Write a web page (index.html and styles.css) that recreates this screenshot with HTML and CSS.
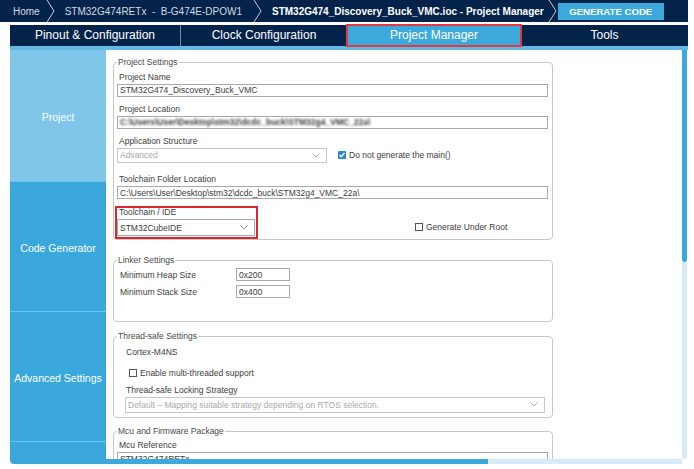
FILE: index.html
```html
<!DOCTYPE html>
<html>
<head>
  <meta charset="UTF-8" />
  <title>Project Manager</title>
  <link rel="stylesheet" href="styles.css">
</head>
<body>
  <div class="topbar">
    <span class="crumb home">Home</span>
    <svg class="chev chev-1" width="9" height="22" viewBox="0 0 9 22"><polyline points="1,0 8,11 1,22" fill="none" stroke="#c3cdd9" stroke-width="1"/></svg>
    <span class="crumb">STM32G474RETx&nbsp; - &nbsp;B-G474E-DPOW1</span>
    <svg class="chev chev-2" width="9" height="22" viewBox="0 0 9 22"><polyline points="1,0 8,11 1,22" fill="none" stroke="#c3cdd9" stroke-width="1"/></svg>
    <span class="crumb current">STM32G474_Discovery_Buck_VMC.ioc - Project Manager</span>
    <svg class="chev chev-3" width="9" height="22" viewBox="0 0 9 22"><polyline points="1,0 8,11 1,22" fill="none" stroke="#c3cdd9" stroke-width="1"/></svg>
    <div class="generate">GENERATE CODE</div>
  </div>

  <div class="tabs">
    <div class="tab tab-pinout">Pinout &amp; Configuration</div>
    <div class="tab tab-clock">Clock Configuration</div>
    <div class="tab tab-pm active">Project Manager</div>
    <div class="tab tab-tools">Tools</div>
  </div>

  <div class="frame">
    <div class="sidebar">
      <div class="side-item side-project">Project</div>
      <div class="side-item">Code Generator</div>
      <div class="side-item">Advanced Settings</div>
      <div class="side-item side-last"></div>
    </div>

    <div class="main">
      <div class="viewport">
        <fieldset class="group group-project">
          <legend>Project Settings</legend>
          <div class="label first">Project Name</div>
          <input class="text" type="text" value="STM32G474_Discovery_Buck_VMC">

          <div class="label">Project Location</div>
          <div class="text blurred"><span>C:\Users\User\Desktop\stm32\dcdc_buck\STM32g4_VMC_22a\</span></div>

          <div class="label">Application Structure</div>
          <div class="row row-structure">
            <div class="select disabled select-structure">
              <span>Advanced</span>
              <svg width="8" height="5" viewBox="0 0 8 5"><polyline points="0.5,0.5 4,4 7.5,0.5" fill="none" stroke="#b0b0b0" stroke-width="1"/></svg>
            </div>
            <div class="check">
              <span class="box checked"><svg width="8" height="8" viewBox="0 0 8 8"><polyline points="1.5,4 3.2,5.8 6.5,2" fill="none" stroke="#fff" stroke-width="1.3"/></svg></span>
              Do not generate the main()
            </div>
          </div>

          <div class="label label-folder">Toolchain Folder Location</div>
          <input class="text" type="text" value="C:\Users\User\Desktop\stm32\dcdc_buck\STM32g4_VMC_22a\">

          <div class="row row-ide">
            <div class="ide">
              <div class="label ide-label">Toolchain / IDE</div>
              <div class="select select-ide">
                <span>STM32CubeIDE</span>
                <svg width="8" height="5" viewBox="0 0 8 5"><polyline points="0.5,0.5 4,4 7.5,0.5" fill="none" stroke="#8a8a8a" stroke-width="1"/></svg>
              </div>
            </div>
            <div class="check check-root">
              <span class="box"></span>
              Generate Under Root
            </div>
          </div>
        </fieldset>

        <fieldset class="group group-linker">
          <legend>Linker Settings</legend>
          <div class="pair first">
            <span class="pair-label">Minimum Heap Size</span>
            <input class="text small" type="text" value="0x200">
          </div>
          <div class="pair">
            <span class="pair-label">Minimum Stack Size</span>
            <input class="text small" type="text" value="0x400">
          </div>
        </fieldset>

        <fieldset class="group group-thread">
          <legend>Thread-safe Settings</legend>
          <div class="label core">Cortex-M4NS</div>
          <div class="check check-thread">
            <span class="box"></span>
            Enable multi-threaded support
          </div>
          <div class="label core">Thread-safe Locking Strategy</div>
          <div class="select disabled select-lock">
            <span>Default &ndash; Mapping suitable strategy depending on RTOS selection.</span>
            <svg width="8" height="5" viewBox="0 0 8 5"><polyline points="0.5,0.5 4,4 7.5,0.5" fill="none" stroke="#b0b0b0" stroke-width="1"/></svg>
          </div>
        </fieldset>

        <fieldset class="group group-mcu">
          <legend>Mcu and Firmware Package</legend>
          <div class="label mcu-label">Mcu Reference</div>
          <input class="text" type="text" value="STM32G474RETx">
        </fieldset>
      </div>
      <div class="hscroll">
        <div class="hthumb"></div>
        <div class="htrack"></div>
      </div>
    </div>

    <div class="vscroll">
      <div class="vthumb"></div>
      <div class="vtrack"></div>
    </div>
  </div>
</body>
</html>
```

FILE: styles.css
```css
body {
  margin: 0;
  background: #ffffff;
  font-family: "Liberation Sans", Arial, sans-serif;
}
.topbar {
  display: flex;
  align-items: center;
  width: 688px;
  height: 22px;
  background: #03234b;
  font-size: 10px;
  color: #d3dae3;
  white-space: nowrap;
}
.crumb.home {
  margin-left: 13px;
}
.crumb.current {
  font-weight: bold;
  color: #ffffff;
}
.chev {
  flex: none;
  display: block;
}
.chev-1 {
  margin: 0 10px 0 6px;
}
.chev-2 {
  margin: 0 10px 0 11px;
}
.chev-3 {
  margin: 0 1px 0 4px;
}
.generate {
  width: 106px;
  height: 17px;
  line-height: 17px;
  background: #3ca9dd;
  color: #ffffff;
  font-size: 9.6px;
  font-weight: bold;
  text-align: center;
}
.tabs {
  display: flex;
  width: 678px;
  height: 21px;
  margin: 3px 0 0 10px;
  background: #03234b;
}
.tab {
  flex: none;
  box-sizing: border-box;
  height: 21px;
  line-height: 21px;
  text-align: center;
  color: #ffffff;
  font-size: 12px;
}
.tab-pinout {
  width: 171px;
  border-right: 1px solid #7d8ba0;
}
.tab-clock {
  width: 166px;
}
.tab-pm {
  width: 174px;
}
.tab-tools {
  width: 167px;
}
.tab.active {
  background: #3ca9dd;
  outline: 2px solid #e5383d;
  outline-offset: -1px;
}
.frame {
  display: flex;
  width: 678px;
  margin-left: 10px;
  border-top: 4px solid #62b9e4;
}
.sidebar {
  width: 96px;
  flex: none;
  display: flex;
  flex-direction: column;
}
.side-item {
  box-sizing: border-box;
  height: 130px;
  padding-top: 3px;
  display: flex;
  align-items: center;
  justify-content: center;
  background: #3aa8dc;
  border-top: 1px solid #72c1e8;
  color: #ffffff;
  font-size: 10.5px;
}
.side-project {
  height: 131px;
  background: #80c6ea;
  border-top: none;
}
.side-last {
  height: 23px;
  border-bottom-left-radius: 4px;
}
.main {
  width: 576px;
  flex: none;
  display: flex;
  flex-direction: column;
}
.viewport {
  height: 409px;
  overflow: hidden;
  padding: 7.5px 0 0 7px;
  box-sizing: border-box;
  font-size: 8.5px;
  color: #3c3c3c;
}
.hscroll {
  display: flex;
  height: 5px;
}
.hthumb {
  width: 382px;
  background: #3ca9dd;
}
.htrack {
  flex: 1;
  background: #d6eaf7;
}
.vscroll {
  width: 5px;
  flex: none;
  display: flex;
  flex-direction: column;
}
.vthumb {
  height: 212px;
  background: #3ca9dd;
  border-radius: 0 0 3px 3px;
}
.vtrack {
  height: 197px;
  background: #d6eaf7;
}

/* form groups */
.group {
  box-sizing: border-box;
  width: 440px;
  margin: 0 0 9.5px;
  padding: 0 4px 0 3px;
  border: 1px solid #c8c8c8;
  border-radius: 4px;
}
.group legend {
  padding: 0 1px;
  font-size: 8.5px;
  line-height: 9px;
  color: #4a4a4a;
}
.group-project {
  margin-bottom: 15.5px;
}
.label {
  height: 11px;
  line-height: 11px;
  padding-left: 2px;
  margin-top: 7px;
  margin-bottom: 1px;
  white-space: nowrap;
}
.label.first {
  margin-top: 5px;
}
.label-folder {
  margin-top: 11.5px;
}
.text {
  display: block;
  box-sizing: border-box;
  width: 431px;
  height: 13px;
  margin: 0;
  padding: 0 2px;
  border: 1px solid #a9a9a9;
  background: #ffffff;
  font-family: "Liberation Sans", Arial, sans-serif;
  font-size: 8.5px;
  line-height: 11px;
  color: #3c3c3c;
  overflow: hidden;
  white-space: nowrap;
}
.text.blurred span {
  display: inline-block;
  color: #3a3a3a;
  font-weight: bold;
  filter: blur(1.3px);
}
.text.small {
  width: 54px;
}
.row {
  display: flex;
  align-items: center;
}
.select {
  box-sizing: border-box;
  display: flex;
  align-items: center;
  justify-content: space-between;
  height: 15px;
  padding: 0 6px 0 2px;
  border: 1px solid #b4b4b4;
  background: #ffffff;
  white-space: nowrap;
}
.select.disabled {
  color: #a9a9a9;
  border-color: #c6c6c6;
}
.select-structure {
  width: 210px;
}
.check {
  display: flex;
  align-items: center;
  gap: 3px;
  white-space: nowrap;
}
.row-structure .check {
  margin-left: 11px;
}
.box {
  box-sizing: border-box;
  width: 8px;
  height: 8px;
  border: 1px solid #555555;
  background: #ffffff;
  display: flex;
  align-items: center;
  justify-content: center;
}
.box.checked {
  border: none;
  background: #2f86d1;
  border-radius: 1px;
}
.row-ide {
  align-items: flex-end;
  margin-top: 7px;
}
.ide {
  box-sizing: border-box;
  width: 143px;
  height: 33px;
  margin-left: -2px;
  border: 2px solid #e0262d;
}
.ide-label {
  margin: -1px 0 1px;
}
.select-ide {
  width: 138px;
  height: 17px;
  margin-left: 0;
  border-color: #a9a9a9;
}
.check-root {
  margin: 0 0 7px 157px;
}
.pair {
  display: flex;
  align-items: center;
  margin-top: 4px;
}
.pair.first {
  margin-top: 3.5px;
}
.pair-label {
  width: 116px;
  padding-left: 3px;
  white-space: nowrap;
}
.group-linker {
  padding-bottom: 23px;
}
.core {
  padding-left: 9px;
  margin-top: 6px;
}
.check-thread {
  height: 11px;
  margin: 9.5px 0 0 12px;
}
.check-thread + .core {
  margin-top: 6.5px;
}
.select-lock {
  width: 420px;
  height: 16px;
  margin-left: 8px;
}
.group-thread {
  padding-bottom: 4px;
}
.mcu-label {
  margin-top: 4px;
}
```
